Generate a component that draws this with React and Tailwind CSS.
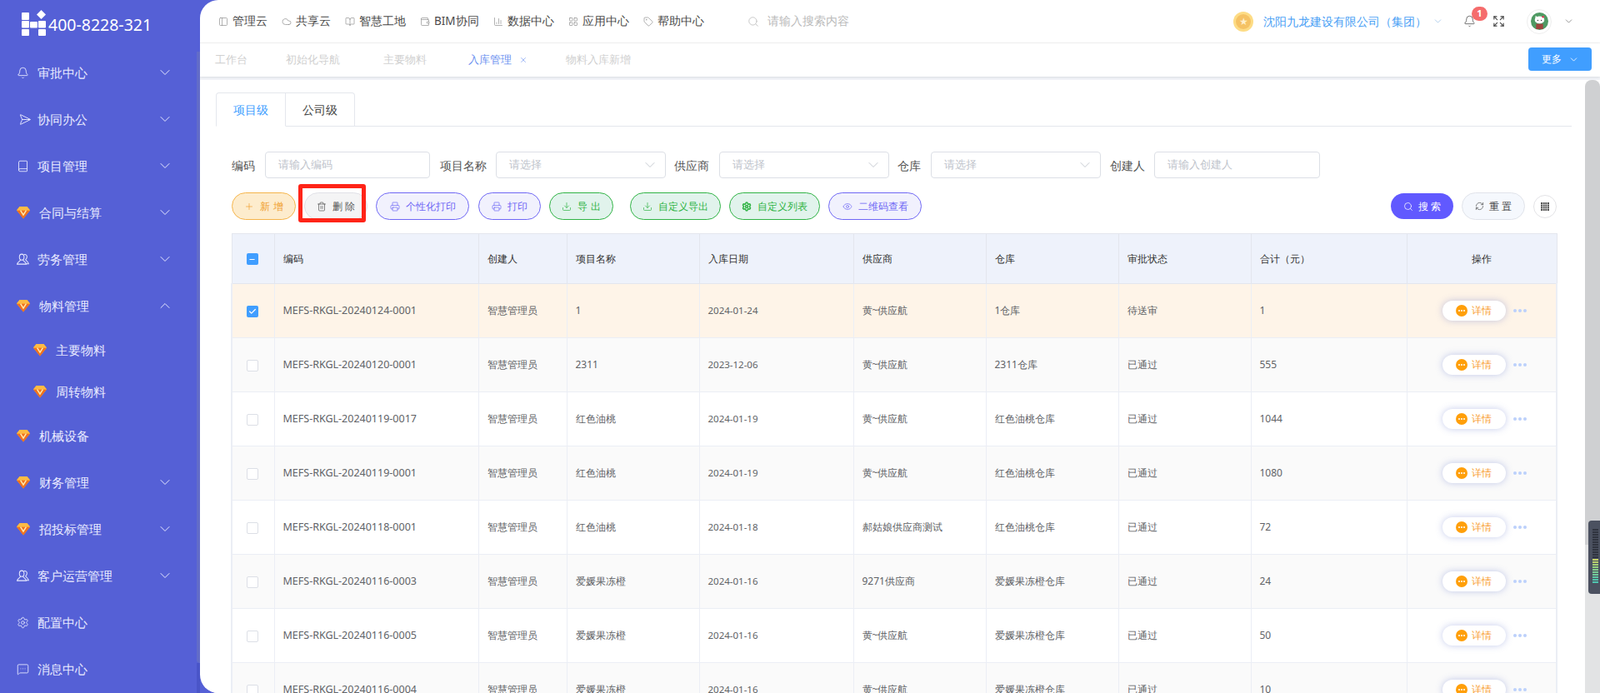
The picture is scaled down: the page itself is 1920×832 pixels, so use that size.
import {
  Bell, Send, BookOpen, Settings, MessageSquareMore, ChevronDown, ChevronUp, Cloud, Search, Expand,
  Trash2, Printer, Download, Eye, RefreshCw, Check, Minus, X, Plus, Book, Wallet, BarChart3, LayoutGrid, Tag, PanelLeft,
} from "lucide-react";

const FONT = "font-['Noto_Sans','Noto_Sans_CJK_SC',sans-serif]";

const Gem = ({ className = "" }) => (
  <svg viewBox="0 0 16 16" className={className}>
    <path d="M3.5 1h9L16 5.5 8 15.5 0 5.5z" fill="#f9a51c" />
    <path d="M0 5.5h16L8 15.5z" fill="#f0701f" />
    <path d="M3.5 1h9L16 5.5H0z" fill="#fdbb45" />
    <path d="M4.6 5.7 8 11l3.4-5.3" fill="none" stroke="#ffe9a8" strokeWidth="1.5" />
  </svg>
);

const Logo = () => (
  <svg viewBox="0 0 29 31" className="w-[29px] h-[31px] shrink-0" fill="#fff">
    <rect x="0" y="3" width="9" height="9" rx="1" />
    <rect x="0" y="13" width="9" height="8.5" rx="1" />
    <rect x="0" y="23" width="9" height="8" rx="1" />
    <rect x="10" y="14" width="9" height="7.5" rx="1" />
    <rect x="20" y="13" width="9" height="8.5" rx="1" />
    <rect x="20" y="23" width="9" height="8" rx="1" />
    <path d="M23.5 0l5.5 5.5-5.5 5.5-5.5-5.5z" />
  </svg>
);

// bust icon used by the labour and customer menus
const Person = ({ className = "" }) => (
  <svg viewBox="0 0 16 16" className={className} fill="none" stroke="currentColor" strokeWidth="1.1">
    <ellipse cx="6.5" cy="5" rx="3" ry="3.8" />
    <path d="M4.8 8.5c.2 1.6-3.8 2.6-4.2 5.5h11.8c-.4-2.9-4.4-3.9-4.2-5.5" />
    <path d="M9.5 1.6c2.6-.4 4 1.4 3.6 3.6-.2 1.3-.9 2.4-1.7 3 .3 1.4 3.3 2 3.8 5.3h-2.4" />
  </svg>
);

const MENU = [
  { label: "审批中心", icon: Bell, arrow: "down" },
  { label: "协同办公", icon: Send, arrow: "down", rotate: true },
  { label: "项目管理", icon: Book, arrow: "down" },
  { label: "合同与结算", gem: true, arrow: "down" },
  { label: "劳务管理", icon: Person, arrow: "down" },
  { label: "物料管理", gem: true, arrow: "up" },
  { label: "主要物料", gem: true, sub: true },
  { label: "周转物料", gem: true, sub: true },
  { label: "机械设备", gem: true },
  { label: "财务管理", gem: true, arrow: "down" },
  { label: "招投标管理", gem: true, arrow: "down" },
  { label: "客户运营管理", icon: Person, arrow: "down" },
  { label: "配置中心", icon: Settings },
  { label: "消息中心", icon: MessageSquareMore },
];

const TOPNAV = [
  { label: "管理云", icon: PanelLeft },
  { label: "共享云", icon: Cloud },
  { label: "智慧工地", icon: BookOpen },
  { label: "BIM协同", icon: Wallet },
  { label: "数据中心", icon: BarChart3 },
  { label: "应用中心", icon: LayoutGrid },
  { label: "帮助中心", icon: Tag },
];

const ROWS = [
  ["MEFS-RKGL-20240124-0001", "1", "2024-01-24", "黄~供应航", "1仓库", "待送审", "1"],
  ["MEFS-RKGL-20240120-0001", "2311", "2023-12-06", "黄~供应航", "2311仓库", "已通过", "555"],
  ["MEFS-RKGL-20240119-0017", "红色油桃", "2024-01-19", "黄~供应航", "红色油桃仓库", "已通过", "1044"],
  ["MEFS-RKGL-20240119-0001", "红色油桃", "2024-01-19", "黄~供应航", "红色油桃仓库", "已通过", "1080"],
  ["MEFS-RKGL-20240118-0001", "红色油桃", "2024-01-18", "郝姑娘供应商测试", "红色油桃仓库", "已通过", "72"],
  ["MEFS-RKGL-20240116-0003", "爱媛果冻橙", "2024-01-16", "9271供应商", "爱媛果冻橙仓库", "已通过", "24"],
  ["MEFS-RKGL-20240116-0005", "爱媛果冻橙", "2024-01-16", "黄~供应航", "爱媛果冻橙仓库", "已通过", "50"],
  ["MEFS-RKGL-20240116-0004", "爱媛果冻橙", "2024-01-16", "黄~供应航", "爱媛果冻橙仓库", "已通过", "10"],
];

const COLS = ["w-[51px]", "w-[245px]", "w-[106px]", "w-[159px]", "w-[185px]", "w-[159px]", "w-[159px]", "w-[159px]", "w-[187px]", "w-[180px]"];
const HEADS = ["编码", "创建人", "项目名称", "入库日期", "供应商", "仓库", "审批状态", "合计（元）"];

function Sidebar() {
  return (
    <aside className="relative w-[240px] h-[832px] shrink-0 bg-[#5560d6] text-white overflow-hidden">
      <div className="absolute right-0 top-[62px] bottom-[36px] w-[4px] rounded-bl bg-[#636dc8]" />
      <div className="absolute right-0 bottom-0 h-[36px] w-[4px] bg-[#4a55c8]" />
      <div className="relative h-[52px]">
        <div className="absolute left-[26px] top-[12px]"><Logo /></div>
        <span className="absolute left-[58px] top-[18px] text-[19.5px] leading-[24px] font-['Liberation_Sans',sans-serif]">400-8228-321</span>
      </div>
      <nav className="pt-[7px]">
        {MENU.map((m) => {
          const Icon = m.icon;
          return (
            <div key={m.label} className={`flex items-center ${m.sub ? "h-[50px] pl-[40px]" : "h-[56px] pl-[20px]"} pr-[32px] text-[15px] text-[#e8eaff] font-medium`}>
              {m.gem ? (
                <Gem className="w-[16px] h-[16px] mr-[11px]" />
              ) : (
                <Icon className={`w-[15px] h-[15px] mr-[10px] ${m.rotate ? "rotate-45" : ""}`} strokeWidth={1.4} />
              )}
              <span>{m.label}</span>
              {m.arrow === "down" && <ChevronDown className="w-[20px] h-[20px] ml-auto" strokeWidth={1.2} />}
              {m.arrow === "up" && <ChevronUp className="w-[20px] h-[20px] ml-auto" strokeWidth={1.2} />}
            </div>
          );
        })}
      </nav>
    </aside>
  );
}

function Header() {
  return (
    <header className="flex items-center h-[52px] pl-[22px] pr-[31px] border-b border-[#f2f2f2] text-[13.5px] text-[#4a4a4a]">
      {TOPNAV.map((n) => {
        const Icon = n.icon;
        return (
          <div key={n.label} className="flex items-center mr-[17px] h-full">
            <Icon className="w-[12px] h-[12px] mr-[5px] text-[#888]" strokeWidth={1.3} />
            <span>{n.label}</span>
          </div>
        );
      })}
      <Search className="w-[14px] h-[14px] ml-[35px] text-[#bbb]" strokeWidth={1.4} />
      <span className="ml-[10px] text-[#bbb]">请输入搜索内容</span>
      <div className="ml-auto flex items-center">
        <div className="w-[24px] h-[24px] rounded-full bg-[#fddc85] flex items-center justify-center">
          <div className="w-[18px] h-[18px] rounded-full bg-[#f5c264] flex items-center justify-center text-[12px] leading-none text-[#fff0cc]">★</div>
        </div>
        <span className="ml-[12px] text-[14px] text-[#4a9ff5]">沈阳九龙建设有限公司（集团）</span>
        <ChevronDown className="w-[13px] h-[13px] ml-[7px] text-[#9bbfe8]" strokeWidth={1.4} />
        <div className="relative ml-[24px]">
          <Bell className="w-[15px] h-[15px] text-[#555]" strokeWidth={1.3} />
          <span className="absolute -top-[10px] left-[10px] w-[19px] h-[17px] rounded-full bg-[#f56c6c] text-white text-[11px] font-['Liberation_Sans',sans-serif] font-bold flex items-center justify-center">1</span>
        </div>
        <Expand className="w-[15px] h-[15px] ml-[20px] text-[#444]" strokeWidth={1.8} />
        <div className="ml-[26px] w-[30px] h-[30px] rounded-full border border-[#eee] flex items-center justify-center">
          <svg viewBox="0 0 20 20" className="w-[21px] h-[21px]">
            <circle cx="10" cy="10" r="10" fill="#4f9a63" />
            <rect x="6" y="13" width="8" height="6" fill="#a1453f" />
            <ellipse cx="10" cy="8.5" rx="5.5" ry="4.2" fill="#fff" />
            <path d="M5 7l.5-3.5 2.5 2.5zM15 7l-.5-3.5-2.5 2.5z" fill="#fff" />
            <circle cx="8" cy="9" r="0.6" fill="#222" />
            <circle cx="12" cy="9" r="0.6" fill="#222" />
            <circle cx="14" cy="5" r="1.2" fill="#d6314a" />
          </svg>
        </div>
        <ChevronDown className="w-[13px] h-[13px] ml-[14px] text-[#777]" strokeWidth={1.4} />
      </div>
    </header>
  );
}

function TabsBar() {
  return (
    <div className="relative flex items-center h-[40px] pl-[18px] text-[13px] text-[#d0d0d0] bg-white shadow-[0_1px_3px_rgba(0,0,0,0.1)]">
      <span>工作台</span>
      <span className="ml-[46px]">初始化导航</span>
      <span className="ml-[52px]">主要物料</span>
      <span className="ml-[50px] text-[#6e93f0]">入库管理</span>
      <X className="w-[10px] h-[10px] ml-[9px] text-[#6e93f0]" strokeWidth={1.5} />
      <span className="ml-[46px]">物料入库新增</span>
      <div className="absolute right-[10px] top-[5px] w-[76px] h-[28px] rounded bg-[#409eff] text-white text-[12px] flex items-center justify-center">
        更多 <ChevronDown className="w-[13px] h-[13px] ml-[8px]" strokeWidth={1.5} />
      </div>
    </div>
  );
}

const Field = ({ className, placeholder, select }) => (
  <div className={`flex items-center shrink-0 h-[32px] rounded border border-[#dcdfe6] pl-[15px] pr-[8px] text-[13px] text-[#c0c4cc] ${className}`}>
    {placeholder}
    {select && <ChevronDown className="w-[20px] h-[20px] ml-auto" strokeWidth={1.1} />}
  </div>
);

const BTN = {
  orange: "border-[#f5b44a] bg-[#fdeccd] text-[#f0a030]",
  gray: "border-[#e0e0e6] bg-[#f4f4f5] text-[#555]",
  purple: "border-[#6f67f5] bg-[#f1f1fd] text-[#6f67f5]",
  green: "border-[#2fb344] bg-[#e1f3ec] text-[#2fb344]",
};

const Btn = ({ kind, icon: Icon, children, className, heavy }) => (
  <div className={`flex items-center justify-center shrink-0 h-[33px] rounded-full border text-[12px] ${BTN[kind]} ${className}`}>
    {Icon && <Icon className="w-[12px] h-[12px] mr-[7px]" strokeWidth={heavy ? 3 : 1.4} />}
    {children}
  </div>
);

function Toolbar() {
  return (
    <div className="relative flex items-center h-[33px] mt-[17px] ml-[34px]">
      <Btn kind="orange" icon={Plus} className="w-[77px]">新 增</Btn>
      <Btn kind="gray" icon={Trash2} className="w-[76px] ml-[10px]">删 除</Btn>
      <div className="absolute left-[80px] -top-[10px] w-[81px] h-[46px] rounded-[3px] border-[5px] border-[#ff2418]" />
      <Btn kind="purple" icon={Printer} className="w-[112px] ml-[10px]">个性化打印</Btn>
      <Btn kind="purple" icon={Printer} className="w-[75px] ml-[11px]">打印</Btn>
      <Btn kind="green" icon={Download} className="w-[77px] ml-[10px]">导 出</Btn>
      <Btn kind="green" icon={Download} className="w-[109px] ml-[20px]">自定义导出</Btn>
      <Btn kind="green" icon={Settings} heavy className="w-[109px] ml-[10px]">自定义列表</Btn>
      <Btn kind="purple" icon={Eye} className="w-[112px] ml-[10px]">二维码查看</Btn>
      <div className="ml-auto flex items-center">
        <div className="flex items-center justify-center w-[75px] h-[31px] rounded-full bg-[#6159ff] text-white text-[12px]">
          <Search className="w-[12px] h-[12px] mr-[6px]" strokeWidth={1.5} />搜 索
        </div>
        <div className="flex items-center justify-center w-[76px] h-[33px] ml-[10px] rounded-full border border-[#e0e3ea] bg-[#f5f8fd] text-[#444] text-[12px]">
          <RefreshCw className="w-[11px] h-[11px] mr-[6px]" strokeWidth={1.4} />重 置
        </div>
        <div className="flex items-center justify-center w-[28px] h-[28px] ml-[10px] rounded-full border border-[#e3e3e6]">
          <svg viewBox="0 0 10 10" className="w-[10px] h-[10px]" fill="#555">
            <path d="M0 0h10v10H0z" />
            <path d="M2.2 0h.6v10h-.6zM4.7 0h.6v10h-.6zM7.2 0h.6v10h-.6zM0 2.2h10v.6H0zM0 4.7h10v.6H0zM0 7.2h10v.6H0z" fill="#fff" />
          </svg>
        </div>
      </div>
    </div>
  );
}

function RowActions() {
  return (
    <div className="flex items-center pl-[42px]">
      <div className="flex items-center justify-center w-[76px] h-[24px] rounded-full bg-white shadow-[0_0_8px_rgba(90,110,200,0.35)] text-[12px] text-[#f9a034]">
        <span className="w-[14px] h-[14px] rounded-full bg-[#ff9f0a] flex items-center justify-center mr-[5px] gap-[1px]">
          <i className="w-[2px] h-[2px] rounded-full bg-white" />
          <i className="w-[2px] h-[2px] rounded-full bg-white" />
          <i className="w-[2px] h-[2px] rounded-full bg-white" />
        </span>
        详情
      </div>
      <div className="flex gap-[2px] ml-[9px]">
        <i className="w-[4px] h-[4px] rounded-full bg-[#bcd0fb]" />
        <i className="w-[4px] h-[4px] rounded-full bg-[#bcd0fb]" />
        <i className="w-[4px] h-[4px] rounded-full bg-[#bcd0fb]" />
      </div>
    </div>
  );
}

function DataTable() {
  return (
    <table className="table-fixed w-[1590px] ml-[33px] mt-[16px] border-collapse text-[12px] text-[#606266]">
      <colgroup>
        {COLS.map((c, i) => <col key={i} className={c} />)}
      </colgroup>
      <thead>
        <tr className="h-[60px] bg-[#eef2fb] text-[#333] font-medium">
          <th className="border border-[#e3e6ee] pr-[2px]">
            <span className="inline-flex items-center justify-center w-[14px] h-[14px] rounded-[2px] bg-[#409eff] align-middle">
              <Minus className="w-[9px] h-[9px] text-white" strokeWidth={3} />
            </span>
          </th>
          {HEADS.map((h) => (
            <th key={h} className="border border-[#e3e6ee] pl-[10px] text-left font-medium">{h}</th>
          ))}
          <th className="border border-[#e3e6ee] text-center font-medium">操作</th>
        </tr>
      </thead>
      <tbody>
        {ROWS.map((r, i) => (
          <tr key={r[0]} className={`h-[65px] ${i === 0 ? "bg-[#fef4e8]" : i % 2 === 1 ? "bg-[#fafafa]" : "bg-white"}`}>
            <td className="border border-[#ebeef5] border-l-2 pr-[2px] text-center">
              {i === 0 ? (
                <span className="inline-flex items-center justify-center w-[14px] h-[14px] rounded-[2px] bg-[#409eff] align-middle">
                  <Check className="w-[10px] h-[10px] text-white" strokeWidth={3} />
                </span>
              ) : (
                <span className="inline-block w-[14px] h-[14px] rounded-[2px] border border-[#dcdfe6] bg-white align-middle" />
              )}
            </td>
            <td className="border border-[#ebeef5] pl-[10px] text-[12.5px]">{r[0]}</td>
            <td className="border border-[#ebeef5] pl-[10px]">智慧管理员</td>
            <td className="border border-[#ebeef5] pl-[10px]">{r[1]}</td>
            <td className="border border-[#ebeef5] pl-[10px] text-[11.5px]">{r[2]}</td>
            <td className="border border-[#ebeef5] pl-[10px]">{r[3]}</td>
            <td className="border border-[#ebeef5] pl-[10px]">{r[4]}</td>
            <td className="border border-[#ebeef5] pl-[10px]">{r[5]}</td>
            <td className="border border-[#ebeef5] pl-[10px]">{r[6]}</td>
            <td className="border border-[#ebeef5] border-r-2"><RowActions /></td>
          </tr>
        ))}
      </tbody>
    </table>
  );
}

// dark level meter that sits over the page scrollbar
function ScrollWidget() {
  const dark = Array.from({ length: 12 });
  const lit = ["#c6d267", "#b9d06c", "#a5cf78", "#93cf7f", "#84cd8b", "#78cb93", "#72c99a", "#5fc6a4", "#52c4aa", "#4fc3ae"];
  return (
    <div className="absolute right-0 top-[625px] w-[14px] h-[88px] rounded-l-[4px] bg-[#4b5160] flex flex-col pl-[5px] pt-[10px] gap-[1px] overflow-hidden">
      {dark.map((_, i) => <div key={i} className="w-[7px] h-[2px] shrink-0 bg-[#30343f]" />)}
      {lit.map((c) => <div key={c} className="w-[7px] h-[2px] shrink-0" style={{ background: c }} />)}
    </div>
  );
}

export default function App() {
  return (
    <div className={`relative flex w-[1920px] h-[832px] overflow-hidden bg-[#5560d6] ${FONT}`}>
      <Sidebar />
      <main className="relative flex-1 h-[832px] bg-white rounded-tl-[22px] rounded-bl-[22px] overflow-hidden">
        <Header />
        <TabsBar />
        <div className="h-[4px] bg-[#f2f4f9]" />
        <div className="ml-[4px] h-[736px] bg-white overflow-hidden">
          <div className="flex ml-[15px] mt-[15px] mr-[34px] h-[41px] border-b border-[#e4e7ed] text-[14px]">
            <div className="flex items-center justify-center w-[84px] h-[41px] border border-b-white border-[#e4e7ed] rounded-tl text-[#409eff] bg-white">项目级</div>
            <div className="flex items-center justify-center w-[83px] h-[41px] border border-l-0 border-[#e4e7ed] rounded-tr text-[#444]">公司级</div>
          </div>
          <div className="flex items-center mt-[30px] ml-[34px] text-[14px] text-[#555]">
            <span className="w-[28px] shrink-0">编码</span>
            <Field className="w-[198px] ml-[12px]" placeholder="请输入编码" />
            <span className="ml-[12px] shrink-0">项目名称</span>
            <Field className="w-[204px] ml-[11px]" placeholder="请选择" select />
            <span className="ml-[10px] shrink-0">供应商</span>
            <Field className="w-[204px] ml-[12px]" placeholder="请选择" select />
            <span className="ml-[10px] shrink-0">仓库</span>
            <Field className="w-[204px] ml-[12px]" placeholder="请选择" select />
            <span className="ml-[11px] shrink-0">创建人</span>
            <Field className="w-[199px] ml-[11px]" placeholder="请输入创建人" />
          </div>
          <div className="w-[1624px]"><Toolbar /></div>
          <DataTable />
        </div>
      </main>
      <div className="absolute right-0 top-[96px] w-[18px] h-[736px] bg-[#cfd0d2] rounded-t-[8px]">
        <div className="absolute bottom-0 left-0 w-full h-[178px] bg-[#e2e3e4]" />
      </div>
      <ScrollWidget />
    </div>
  );
}
